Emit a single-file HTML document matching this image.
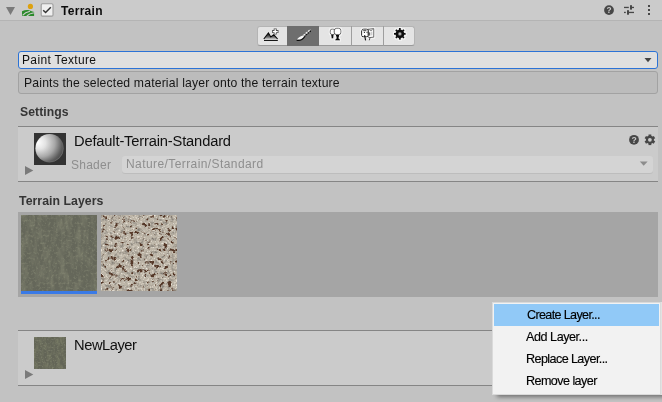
<!DOCTYPE html>
<html><head><meta charset="utf-8">
<style>
*{box-sizing:border-box;margin:0;padding:0}
html,body{width:662px;height:402px;overflow:hidden;background:#C2C2C2;font-family:"Liberation Sans",sans-serif;color:#101010}
.a{position:absolute}
svg{will-change:transform}
.m{font-size:12.6px;color:#000;-webkit-text-stroke:0.15px #000}
.t{position:absolute;white-space:nowrap;line-height:1;will-change:transform}
</style></head><body>
<!-- header -->
<div class="a" style="left:0;top:0;width:662px;height:20px;background:#CBCBCB"></div>
<div class="a" style="left:0;top:20px;width:662px;height:1px;background:#B4B4B4"></div>
<svg class="a" style="left:0;top:0" width="662" height="20">
  <polygon points="6,7 15,7 10.5,15" fill="#7A7A7A"/>
  <circle cx="30.4" cy="6.4" r="2.6" fill="#DDA10F"/>
  <path d="M22,11.2 C24.5,10 27,9.6 29,10.2 C31,10.8 32.5,11.4 34.1,12 L34.1,16 L22,16 Z" fill="#2B8A2B"/>
  <path d="M22.6,15.4 C24.2,13.4 26.6,12 30,11.3" stroke="#CBCBCB" stroke-width="1.1" fill="none"/>
  <path d="M26.8,16.2 C28.4,14.4 30.6,13.2 34.4,12.8" stroke="#CBCBCB" stroke-width="1.1" fill="none"/>
  <rect x="41.2" y="3.7" width="11.8" height="12.4" rx="1.2" fill="#EFEFEF" stroke="#9C9C9C" stroke-width="1.1"/>
  <path d="M43.2,10.2 L45.6,12.5 L50.8,7.3" stroke="#333" stroke-width="1.5" fill="none"/>
  <circle cx="609" cy="10.1" r="4.9" fill="#474747"/>
  <text x="609" y="13.2" font-family="Liberation Sans" font-weight="bold" font-size="8.3" fill="#CBCBCB" text-anchor="middle">?</text>
  <rect x="624" y="6.8" width="4.8" height="1.3" fill="#474747"/>
  <rect x="630" y="5.2" width="2" height="4.4" fill="#474747"/>
  <rect x="632" y="6.8" width="2" height="1.3" fill="#474747"/>
  <rect x="624" y="11.8" width="1.8" height="1.3" fill="#474747"/>
  <rect x="627" y="10.2" width="2" height="4.5" fill="#474747"/>
  <rect x="629" y="11.8" width="5" height="1.3" fill="#474747"/>
  <rect x="648" y="5" width="2" height="2" fill="#474747"/>
  <rect x="648" y="9" width="2" height="2" fill="#474747"/>
  <rect x="648" y="13" width="2" height="2" fill="#474747"/>
</svg>
<div class="t" style="left:60.6px;top:4.54px;font-weight:bold;font-size:12px;letter-spacing:0.283px;color:#0C0C0C">Terrain</div>

<!-- toolbar -->
<div class="a" style="left:257px;top:26px;width:158px;height:20px;background:#E4E4E4;border:1px solid #B4B4B4;border-bottom-color:#999;border-radius:3px"></div>
<div class="a" style="left:287px;top:26px;width:32px;height:20px;background:#6E6E6E"></div>
<div class="a" style="left:351px;top:26px;width:1px;height:20px;background:#9E9E9E"></div>
<div class="a" style="left:383px;top:26px;width:1px;height:20px;background:#9E9E9E"></div>
<svg class="a" style="left:0;top:0" width="662" height="50">
  <defs>
    <linearGradient id="mtn" x1="0" y1="0" x2="0" y2="1"><stop offset="0" stop-color="#000"/><stop offset="1" stop-color="#A8A8A8"/></linearGradient>
    <radialGradient id="ghole" cx="0.5" cy="0.5" r="0.5"><stop offset="0" stop-color="#E8E8E8"/><stop offset="1" stop-color="#555"/></radialGradient>
    <filter id="halo" x="-30%" y="-30%" width="160%" height="160%"><feMorphology in="SourceAlpha" operator="dilate" radius="0.5" result="d"/><feFlood flood-color="#FFFFFF" flood-opacity="0.6"/><feComposite in2="d" operator="in" result="w"/><feMerge><feMergeNode in="w"/><feMergeNode in="SourceGraphic"/></feMerge></filter>
  </defs>
  <!-- mountain + plus -->
  <path d="M264.2,38.8 L268.4,33.2 L270.8,37.4 L273.8,35 L277.2,38.8 Z" fill="url(#mtn)"/>
  <path d="M263.8,39 L268.4,33 L270.8,37 L273.8,34.8 L277.6,39" fill="none" stroke="#050505" stroke-width="1.1" stroke-linejoin="miter"/>
  <rect x="264" y="39.9" width="13.8" height="1.1" fill="#151515"/>
  <path d="M275.2,28.5 V34.5 M272.1,31.6 H278.5" stroke="#505050" stroke-width="3"/>
  <path d="M275.2,29.3 V33.7 M272.9,31.6 H277.7" stroke="#FFFFFF" stroke-width="1.4"/>
  <!-- brush -->
  <path d="M304.4,36.6 L311.4,30.4" stroke="#0A0A0A" stroke-width="1.1" stroke-dasharray="1.3,1.1"/>
  <path d="M303.4,35.6 L310.4,29.4" stroke="#F2F2F2" stroke-width="1.3" stroke-dasharray="2.2,0.8"/>
  <path d="M296.8,39.8 C297.8,37.8 300,36.2 302.8,35.4 L304,36.6 C303,38.6 300.4,40.2 296.8,39.8 Z" fill="#F6F6F6"/>
  <path d="M296.6,40.2 C299.8,40.8 302.8,39.6 304.6,37" stroke="#0A0A0A" stroke-width="1.1" fill="none"/>
  <!-- trees -->
  <g filter="url(#halo)">
    <rect x="330.2" y="29" width="4.8" height="5.6" rx="2" fill="#fff" stroke="#222" stroke-width="0.7"/>
    <path d="M331,34.6 h2.8 l-0.5,3.8 h-1.8 z" fill="#0A0A0A"/>
    <rect x="334.2" y="28.2" width="6.8" height="6.6" rx="2.6" fill="#fff" stroke="#222" stroke-width="0.7"/>
    <path d="M335.8,34.8 h3.4 l-0.5,3.4 l1.3,1.3 v1 h-4.8 v-1 l1.3,-1.3 z" fill="#0A0A0A"/>
  </g>
  <!-- grass -->
  <g filter="url(#halo)">
    <path d="M368,29.2 L373.8,28.6 L373.8,37.2 L369,37.6 L367.8,36.6 Z" fill="#fff" stroke="#4A4A4A" stroke-width="0.9"/>
    <path d="M362.2,30 Q362.2,29 363.6,29 L366.6,29 Q368.2,29 368.2,30.6 L368.2,35.4 Q368.2,36.8 366.8,36.8 L363.2,36.8 Q361.6,36.8 361.6,35.4 L361.6,30.8 Z" fill="#fff" stroke="#0E0E0E" stroke-width="1"/>
  </g>
  <circle cx="364.4" cy="32.3" r="0.65" fill="#111"/>
  <circle cx="367" cy="32.3" r="0.55" fill="#111"/>
  <path d="M363.2,30.7 h3.2" stroke="#111" stroke-width="0.8"/>
  <path d="M364.6,35.2 L365.6,40.3" stroke="#0E0E0E" stroke-width="1.1"/>
  <path d="M369.4,29.8 L370.9,30.8 L372.6,29.6" stroke="#666" stroke-width="0.8" fill="none"/>
  <path d="M369.7,32.4 v3.2" stroke="#222" stroke-width="0.9"/>
  <path d="M371.8,31.6 v3.8" stroke="#9A9A9A" stroke-width="0.7"/>
  <path d="M370,37.6 L369.3,40.3" stroke="#555" stroke-width="1"/>
  <!-- gear -->
  <g transform="translate(399.9,33.9)" filter="url(#halo)">
    <circle r="4.5" fill="#111"/>
    <g fill="#111">
      <rect x="-1" y="-5.9" width="2" height="11.8"/>
      <rect x="-1" y="-5.9" width="2" height="11.8" transform="rotate(45)"/>
      <rect x="-1" y="-5.9" width="2" height="11.8" transform="rotate(90)"/>
      <rect x="-1" y="-5.9" width="2" height="11.8" transform="rotate(135)"/>
    </g>
    <circle r="1.9" fill="url(#ghole)"/>
  </g>
</svg>

<!-- dropdown -->
<div class="a" style="left:18px;top:51px;width:640px;height:18px;background:#DFDFDF;border:1px solid #2B72D6;border-radius:3px"></div>
<div class="t" style="left:22.1px;top:53.74px;font-size:12px;letter-spacing:0.35px;color:#101010">Paint Texture</div>
<svg class="a" style="left:0;top:0" width="662" height="70"><polygon points="644.5,58 651.5,58 648,62.2" fill="#444"/></svg>

<!-- help box -->
<div class="a" style="left:18px;top:71px;width:640px;height:23px;background:#BCBCBC;border:1px solid #A2A2A2;border-radius:3px"></div>
<div class="t" style="left:24.1px;top:76.6px;font-size:12.2px;letter-spacing:0.174px;color:#161616">Paints the selected material layer onto the terrain texture</div>

<!-- settings -->
<div class="t" style="left:19.5px;top:106.3px;font-weight:bold;font-size:12.2px;letter-spacing:0.057px;color:#353535">Settings</div>
<div class="a" style="left:18px;top:126px;width:640px;height:56px;background:#CBCBCB;border-top:1px solid #858585;border-bottom:1px solid #858585"></div>
<div class="a" style="left:34px;top:133px;width:32px;height:32px;background:#333"></div>
<svg class="a" style="left:0;top:0" width="662" height="190">
  <defs><radialGradient id="sph" cx="0.28" cy="0.32" r="0.9" fx="0.08" fy="0.3">
    <stop offset="0" stop-color="#FFFFFF"/><stop offset="0.25" stop-color="#E4E4E4"/><stop offset="0.55" stop-color="#A8A8A8"/><stop offset="0.78" stop-color="#5E5E5E"/><stop offset="1" stop-color="#303030"/></radialGradient>
  <linearGradient id="rim" x1="0" y1="0" x2="1" y2="1"><stop offset="0.55" stop-color="#777" stop-opacity="0"/><stop offset="1" stop-color="#7A7A7A" stop-opacity="0.9"/></linearGradient></defs>
  <circle cx="49.6" cy="148.3" r="14.2" fill="url(#sph)"/>
  <circle cx="49.6" cy="148.3" r="13.6" fill="none" stroke="url(#rim)" stroke-width="1"/>
  <polygon points="25,166 33.3,170.5 25,175" fill="#7A7A7A"/>
  <circle cx="634" cy="139.8" r="4.9" fill="#474747"/>
  <text x="634" y="143.1" font-family="Liberation Sans" font-weight="bold" font-size="8.6" fill="#CBCBCB" text-anchor="middle">?</text>
  <g transform="translate(649.9,139.8)">
    <circle r="4" fill="#474747"/>
    <g fill="#474747">
      <rect x="-1.4" y="-5.3" width="2.8" height="10.6"/>
      <rect x="-1.4" y="-5.3" width="2.8" height="10.6" transform="rotate(60)"/>
      <rect x="-1.4" y="-5.3" width="2.8" height="10.6" transform="rotate(120)"/>
    </g>
    <circle r="1.9" fill="#CBCBCB"/>
  </g>
</svg>
<div class="t" style="left:74.2px;top:134.1px;font-size:14.7px;letter-spacing:-0.165px;color:#101010">Default-Terrain-Standard</div>
<div class="t" style="left:70.8px;top:158.8px;font-size:12px;letter-spacing:0.24px;color:#8E8E8E">Shader</div>
<div class="a" style="left:122px;top:156px;width:531px;height:17px;background:#D4D4D4;border-radius:3px;box-shadow:0 1px 0 #BDBDBD"></div>
<svg class="a" style="left:0;top:150px" width="662" height="30"><polygon points="639.8,11.6 647.6,11.6 643.7,15.8" fill="#8C8C8C"/></svg>
<div class="t" style="left:125.7px;top:157.64px;font-size:12px;letter-spacing:0.414px;color:#8E8E8E">Nature/Terrain/Standard</div>

<!-- terrain layers -->
<div class="t" style="left:19.4px;top:195.4px;font-weight:bold;font-size:12.3px;letter-spacing:0.04px;color:#353535">Terrain Layers</div>
<div class="a" style="left:18px;top:212px;width:640px;height:85px;background:#A5A5A5"></div>
<svg class="a" style="left:21px;top:215px" width="76" height="76">
  <defs>
    <filter id="grass" x="0" y="0" width="100%" height="100%" color-interpolation-filters="sRGB">
      <feTurbulence type="fractalNoise" baseFrequency="0.18 0.06" numOctaves="3" seed="7" result="n"/>
      <feColorMatrix in="n" type="matrix" values="0 0 0 0 0  0 0 0 0 0  0 0 0 0 0  1.5 0 0 0 -0.62" result="m"/>
      <feFlood flood-color="#838571" result="lt"/>
      <feComposite in="lt" in2="m" operator="in" result="lm"/>
      <feTurbulence type="fractalNoise" baseFrequency="0.4" numOctaves="2" seed="5" result="n2"/>
      <feColorMatrix in="n2" type="matrix" values="0 0 0 0 0.56  0 0 0 0 0.57  0 0 0 0 0.48  1.6 0 0 0 -0.82" result="m2"/>
      <feFlood flood-color="#65675A"/>
      <feComposite in="lm" operator="over" result="b"/>
      <feComposite in="m2" in2="b" operator="over"/>
    </filter>
  </defs>
  <rect width="76" height="76" filter="url(#grass)"/>
</svg>
<div class="a" style="left:21px;top:291px;width:76px;height:3px;background:#3A7AE6"></div>
<svg class="a" style="left:101px;top:215px" width="76" height="76">
  <defs>
    <filter id="rock" x="0" y="0" width="100%" height="100%" color-interpolation-filters="sRGB">
      <feTurbulence type="fractalNoise" baseFrequency="0.24" numOctaves="3" seed="3" result="n"/>
      <feColorMatrix in="n" type="matrix" values="0 0 0 0 0  0 0 0 0 0  0 0 0 0 0  -8 0 0 0 3.3" result="m"/>
      <feFlood flood-color="#553828" result="dk"/>
      <feComposite in="dk" in2="m" operator="in" result="dm"/>
      <feTurbulence type="fractalNoise" baseFrequency="0.3" numOctaves="3" seed="11" result="n2"/>
      <feColorMatrix in="n2" type="matrix" values="0 0 0 0 0.5  0 0 0 0 0.48  0 0 0 0 0.45  2.4 0 0 0 -1.15" result="m2"/>
      <feTurbulence type="fractalNoise" baseFrequency="0.6" numOctaves="2" seed="21" result="n3"/>
      <feColorMatrix in="n3" type="matrix" values="0 0 0 0 0.93  0 0 0 0 0.91  0 0 0 0 0.87  3 0 0 0 -1.5" result="m3"/>
      <feFlood flood-color="#BDB5A7"/>
      <feComposite in="m3" operator="over" result="b1"/>
      <feComposite in="m2" in2="b1" operator="over" result="base"/>
      <feComposite in="dm" in2="base" operator="over"/>
    </filter>
  </defs>
  <rect width="76" height="76" filter="url(#rock)"/>
</svg>

<!-- new layer -->
<div class="a" style="left:18px;top:330px;width:640px;height:56px;background:#CBCBCB;border-top:1px solid #858585;border-bottom:1px solid #858585"></div>
<svg class="a" style="left:34px;top:337px" width="32" height="32">
  <defs>
    <filter id="grass2" x="0" y="0" width="100%" height="100%" color-interpolation-filters="sRGB">
      <feTurbulence type="fractalNoise" baseFrequency="0.3 0.12" numOctaves="3" seed="7" result="n"/>
      <feColorMatrix in="n" type="matrix" values="0 0 0 0 0  0 0 0 0 0  0 0 0 0 0  1.5 0 0 0 -0.62" result="m"/>
      <feFlood flood-color="#808369" result="lt"/>
      <feComposite in="lt" in2="m" operator="in" result="lm"/>
      <feTurbulence type="fractalNoise" baseFrequency="0.6" numOctaves="2" seed="5" result="n2"/>
      <feColorMatrix in="n2" type="matrix" values="0 0 0 0 0.56  0 0 0 0 0.57  0 0 0 0 0.48  1.6 0 0 0 -0.82" result="m2"/>
      <feFlood flood-color="#636557"/>
      <feComposite in="lm" operator="over" result="b"/>
      <feComposite in="m2" in2="b" operator="over"/>
    </filter>
  </defs>
  <rect width="32" height="32" filter="url(#grass2)"/>
</svg>
<svg class="a" style="left:0;top:0" width="662" height="402"><polygon points="25,370 33.3,374.5 25,379" fill="#7A7A7A"/></svg>
<div class="t" style="left:73.6px;top:338.1px;font-size:14.7px;letter-spacing:-0.45px;color:#101010">NewLayer</div>

<!-- context menu -->
<div class="a" style="left:497px;top:380px;width:170px;height:17px;background:rgba(0,0,0,0.42);filter:blur(2px)"></div>
<div class="a" style="left:661px;top:302px;width:1px;height:93px;background:#E2E2E2"></div>
<div class="a" style="left:492px;top:302px;width:169px;height:93px;background:#F2F2F2;border:1px solid #DADADA"></div>
<div class="a" style="left:494px;top:304px;width:165px;height:22px;background:#91C9F7"></div>
<div class="t m" style="left:526.5px;top:308.93px;letter-spacing:-0.657px">Create Layer...</div>
<div class="t m" style="left:526.2px;top:331.23px;letter-spacing:-0.455px">Add Layer...</div>
<div class="t m" style="left:525.8px;top:353.23px;letter-spacing:-0.593px">Replace Layer...</div>
<div class="t m" style="left:525.8px;top:375.23px;letter-spacing:-0.573px">Remove layer</div>
</body></html>
